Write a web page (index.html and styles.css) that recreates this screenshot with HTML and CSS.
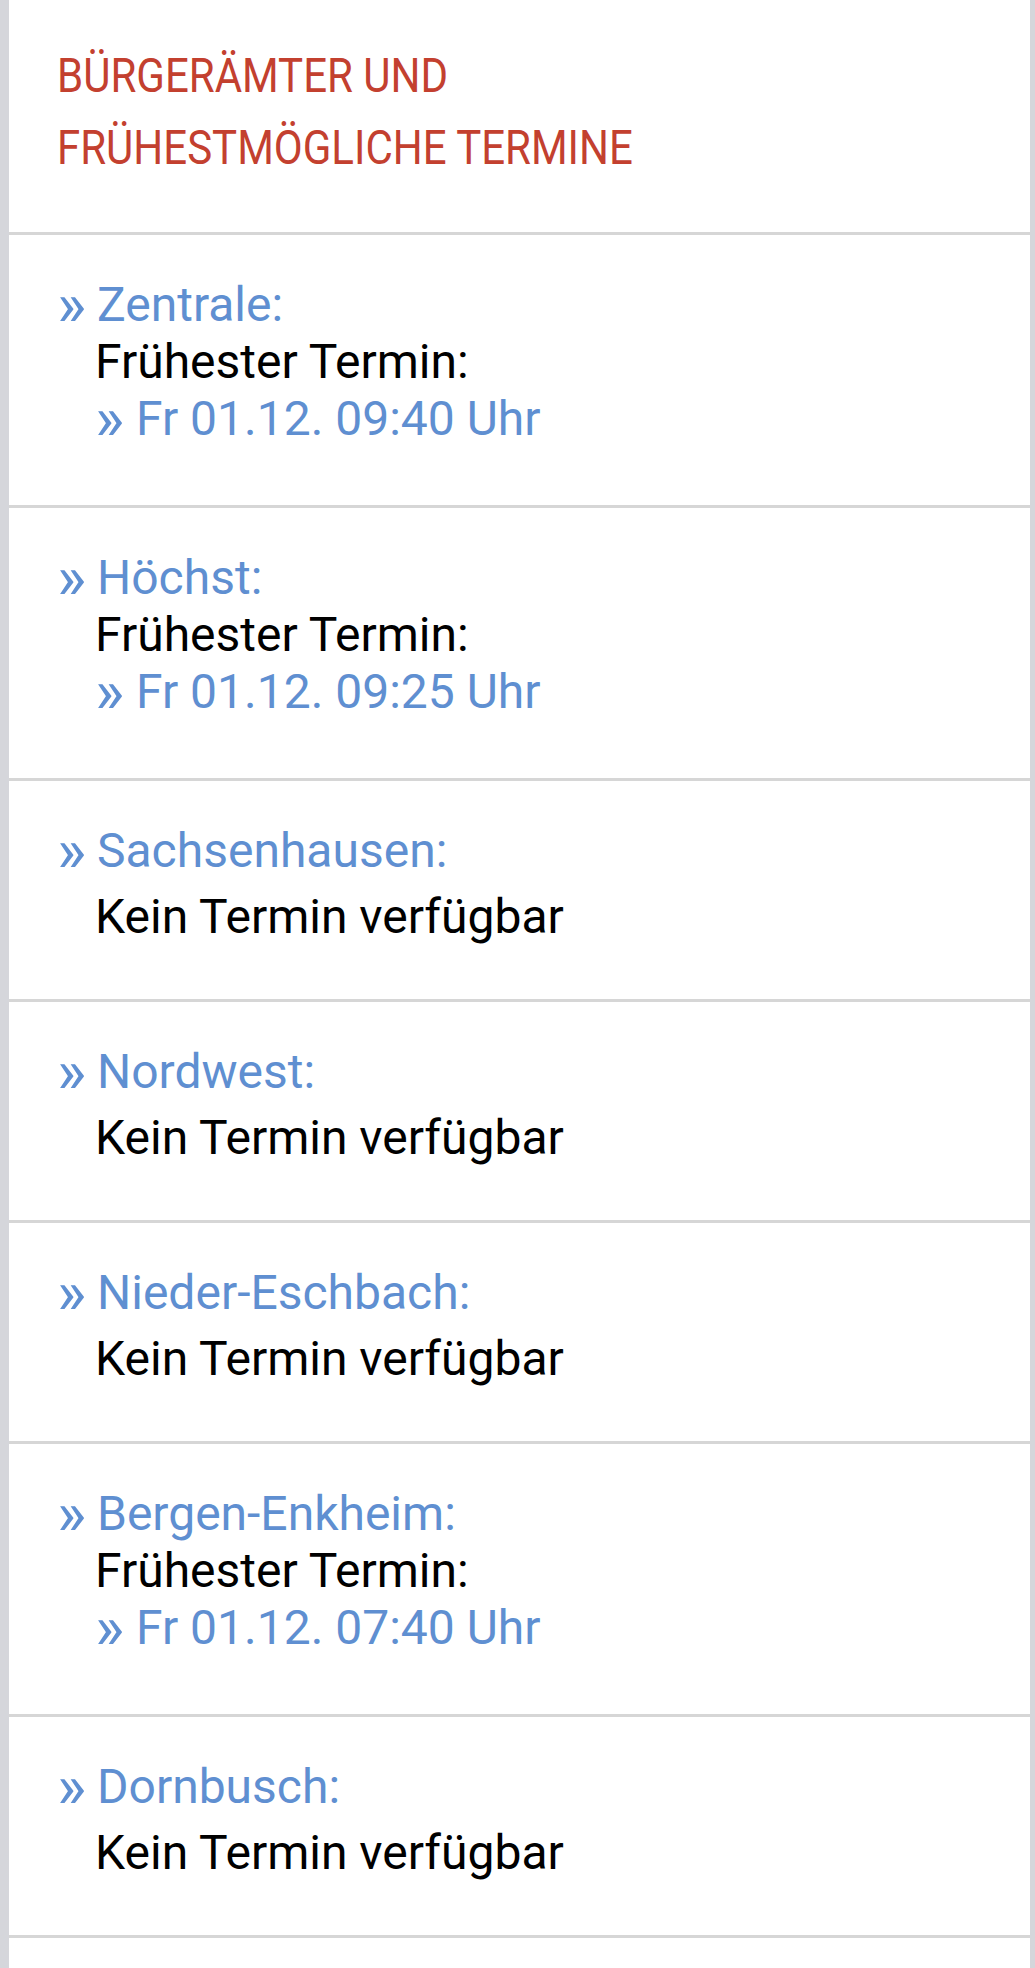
FILE: index.html
```html
<!DOCTYPE html>
<html lang="de">
<head>
<meta charset="utf-8">
<title>Bürgerämter</title>
<link rel="stylesheet" href="styles.css">
</head>
<body>
<div class="card">
  <div class="head">
    <h2 class="title">BÜRGERÄMTER UND<br>FRÜHESTMÖGLICHE TERMINE</h2>
  </div>
  <div class="row">
    <div class="name">Zentrale:</div>
    <div class="detail dated">Frühester Termin:<br><span class="link">Fr 01.12. 09:40 Uhr</span></div>
  </div>
  <div class="row">
    <div class="name">Höchst:</div>
    <div class="detail dated">Frühester Termin:<br><span class="link">Fr 01.12. 09:25 Uhr</span></div>
  </div>
  <div class="row">
    <div class="name">Sachsenhausen:</div>
    <div class="detail none">Kein Termin verfügbar</div>
  </div>
  <div class="row">
    <div class="name">Nordwest:</div>
    <div class="detail none">Kein Termin verfügbar</div>
  </div>
  <div class="row">
    <div class="name">Nieder-Eschbach:</div>
    <div class="detail none">Kein Termin verfügbar</div>
  </div>
  <div class="row">
    <div class="name">Bergen-Enkheim:</div>
    <div class="detail dated">Frühester Termin:<br><span class="link">Fr 01.12. 07:40 Uhr</span></div>
  </div>
  <div class="row">
    <div class="name">Dornbusch:</div>
    <div class="detail none">Kein Termin verfügbar</div>
  </div>
</div>
</body>
</html>
```
FILE: styles.css
```css
html, body {
  margin: 0;
  padding: 0;
}
body {
  background: #d5d6db;
  font-family: Roboto, "Noto Sans", Arial, sans-serif;
  font-size: 48px;
  color: #000;
}
.card {
  background: #fff;
  margin: 0 5px 0 9px;
  min-height: 1968px;
}
.head {
  padding: 40px 0 48px 48px;
  border-bottom: 3px solid #d6d6d6;
}
.title {
  margin: 0;
  font-weight: 400;
  font-size: 48px;
  line-height: 72px;
  color: #c3402f;
  transform: scaleX(0.875);
  transform-origin: left top;
  white-space: nowrap;
}
.row {
  padding: 41px 0 54px 48px;
  border-bottom: 3px solid #d6d6d6;
}
.name {
  line-height: 57px;
  color: #5f8fd1;
}
.name::before,
.link::before {
  content: "»";
  display: inline-block;
  width: 40px;
  font-size: 62px;
  line-height: 57px;
  vertical-align: -5px;
}
.link::before {
  width: 41px;
}
.detail {
  margin-left: 38px;
  line-height: 57px;
}
.dated {
  padding-bottom: 4px;
}
.none {
  margin-top: 9px;
}
.link {
  color: #5f8fd1;
}
```
